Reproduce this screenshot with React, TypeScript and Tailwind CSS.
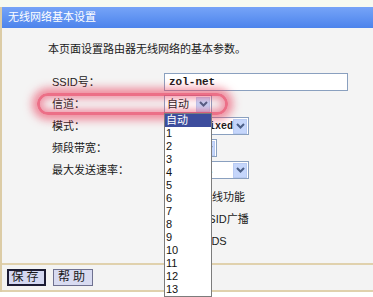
import React from "react"

const FONT = "font-['Liberation_Sans','Noto_Sans_CJK_SC',sans-serif]"

function Arrow() {
  return (
    <div className="flex h-[15px] w-[14px] shrink-0 items-center justify-center border border-[#b9cbf3] bg-[#c5d6fb]">
      <svg width="9" height="6" viewBox="0 0 9 6">
        <path d="M1 1 L4.5 4.5 L8 1" fill="none" stroke="#4b5f86" strokeWidth="2" />
      </svg>
    </div>
  )
}

function Select({ width, value, mono }: { width: string; value: string; mono?: boolean }) {
  return (
    <div className={`flex h-[18px] items-center justify-between overflow-hidden border border-[#8aa0bf] bg-white pl-[2px] pr-[1px] ${width}`}>
      <span className={`whitespace-nowrap ${mono ? "font-['Liberation_Mono',monospace] text-[10px] font-bold" : ""}`}>{value}</span>
      <Arrow />
    </div>
  )
}

function Row({ label, children }: { label: string; children?: React.ReactNode }) {
  return (
    <div className="flex h-[22px] items-center">
      <div className="w-[162px] shrink-0 pl-[50px] whitespace-nowrap">{label}</div>
      {children}
    </div>
  )
}

function Check({ label }: { label: string }) {
  return (
    <div className="flex h-[22px] items-center pl-[164px]">
      <div className="h-[12px] w-[12px] border border-[#1c5180] bg-white" />
      <span className="ml-[1px]">{label}</span>
    </div>
  )
}

const channels = ["自动", "1", "2", "3", "4", "5", "6", "7", "8", "9", "10", "11", "12", "13"]

export default function App() {
  return (
    <div className={`relative h-[297px] w-[373px] overflow-hidden bg-white text-[11px] text-[#1a1a1a] ${FONT}`}>
      <div className="h-[7px] bg-[#f6faf1]" />
      <div className="border-l-2 border-[#dccca6]">
        {/* title bar */}
        <div className="h-[21px] bg-gradient-to-b from-[#76a4f7] to-[#4c83ec] pl-[6px] text-[11px] leading-[21px] text-white">
          无线网络基本设置
        </div>

        {/* settings body */}
        <div className="h-[235px] bg-[#f4f4f4] pt-[13px]">
          <p className="pl-[46px] leading-[16px]">本页面设置路由器无线网络的基本参数。</p>
          <div className="mt-[14px]">
            <Row label="SSID号：">
              <div className="flex h-[18px] w-[184px] items-center border border-[#8aa0bf] bg-white pl-[4px] font-['Liberation_Mono',monospace] text-[11px] font-bold">
                zol-net
              </div>
            </Row>
            <Row label="信道：">
              <Select width="w-[48px]" value="自动" />
            </Row>
            <Row label="模式：">
              <Select width="w-[85px]" value="11bgn mixed" mono />
            </Row>
            <Row label="频段带宽：">
              <Select width="w-[53px]" value="自动" />
            </Row>
            <Row label="最大发送速率：">
              <Select width="w-[85px]" value="150Mbps" />
            </Row>
          </div>
          <div className="mt-[5px]">
            <Check label="开启无线功能" />
            <Check label="开启SSID广播" />
            <Check label="开启WDS" />
          </div>
        </div>

        {/* footer */}
        <div className="flex h-[29px] items-center gap-[7px] border-y-2 border-[#e0d1ad] bg-[#f3f3f3] pl-[5px]">
          <button className="h-[17px] w-[39px] border-2 border-[#1b1b33] bg-[#d3d7f0] text-[12px] leading-[13px] tracking-[3px]">
            保存
          </button>
          <button className="h-[17px] w-[40px] border border-[#6f7190] bg-[#d8dbf1] text-[12px] leading-[13px] tracking-[3px]">
            帮助
          </button>
        </div>
      </div>

      {/* red highlight around the channel row */}
      <div className="pointer-events-none absolute left-[37px] top-[93px] h-[22px] w-[191px] rounded-full border-[3px] border-[#ea4d6c]/80 shadow-[0_0_8px_5px_rgba(235,55,85,0.55),inset_0_0_7px_3px_rgba(235,60,95,0.5)]" />

      {/* open channel list */}
      <div className="absolute left-[164px] top-[113px] w-[48px] border border-[#7c7c7c] bg-white">
        {channels.map((c, i) => (
          <div
            key={c}
            className={`h-[13px] pl-[1px] text-[11px] leading-[13px] ${i === 0 ? "bg-[#3d4d9d] text-white" : "text-[#111]"}`}
          >
            {c}
          </div>
        ))}
      </div>
    </div>
  )
}
